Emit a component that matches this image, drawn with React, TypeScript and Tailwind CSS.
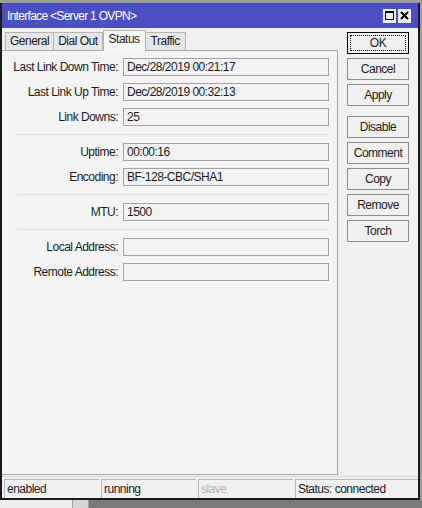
import React from 'react';

const rows: { label: string; value: string }[][] = [
  [
    { label: 'Last Link Down Time:', value: 'Dec/28/2019 00:21:17' },
    { label: 'Last Link Up Time:', value: 'Dec/28/2019 00:32:13' },
    { label: 'Link Downs:', value: '25' },
  ],
  [
    { label: 'Uptime:', value: '00:00:16' },
    { label: 'Encoding:', value: 'BF-128-CBC/SHA1' },
  ],
  [{ label: 'MTU:', value: '1500' }],
  [
    { label: 'Local Address:', value: '' },
    { label: 'Remote Address:', value: '' },
  ],
];

const buttons = [['OK', 'Cancel', 'Apply'], ['Disable', 'Comment', 'Copy', 'Remove', 'Torch']];

const Field = ({ label, value }: { label: string; value: string }) => (
  <div className="flex items-center h-[18px]">
    <div className="w-[116px] text-right pr-[1px]">{label}</div>
    <div className="ml-[4px] w-[206px] h-[18px] border border-[#a3a3a3] bg-[#f2f2f2] px-[3px] leading-[16px]">
      {value}
    </div>
  </div>
);

export default function App() {
  return (
    <div className="w-[422px] h-[508px] bg-[#9c9c9c] pt-[3px] font-['Liberation_Sans',Arial,sans-serif] text-[12px] tracking-[-0.5px] text-[#1c1c1c] overflow-hidden">
      <div className="h-[497px] w-[420px] flex flex-col bg-[#f0f0f0] border-l-2 border-r-2 border-b-2 border-[#1a1a1a]">
        {/* title bar */}
        <div className="h-[25px] bg-[#4c4fc3] flex items-center pl-[5px] pr-[7px] text-white">
          <span className="flex-1 tracking-[-0.7px]">Interface &lt;Server 1 OVPN&gt;</span>
          <div className="flex gap-[2px]">
            <div className="w-[13px] h-[14px] bg-[#ececec] flex items-center justify-center">
              <div className="w-[9px] h-[9px] border border-black border-t-2" />
            </div>
            <div className="w-[13px] h-[14px] bg-[#ececec] flex items-center justify-center">
              <svg width="9" height="9" viewBox="0 0 9 9">
                <path d="M1 1L8 8M8 1L1 8" stroke="#000" strokeWidth="2" />
              </svg>
            </div>
          </div>
        </div>

        <div className="flex flex-1">
          {/* left: tabs + panel */}
          <div className="w-[336px] flex flex-col">
            <div className="flex items-end h-[22px] pl-[3px]">
              <div className="h-[18px] px-[4px] border border-b-0 border-[#b4b4b4] bg-[#e6e6e6] leading-[17px]">General</div>
              <div className="h-[18px] px-[4px] border border-b-0 border-l-0 border-[#b4b4b4] bg-[#e6e6e6] leading-[17px]">Dial Out</div>
              <div className="h-[21px] px-[5px] border border-b-0 border-[#b4b4b4] bg-[#f7f7f7] leading-[17px] -mb-px relative z-10">Status</div>
              <div className="h-[18px] px-[5px] border border-b-0 border-l-0 border-[#b4b4b4] bg-[#e6e6e6] leading-[17px]">Traffic</div>
            </div>
            <div className="flex-1 border border-l-0 border-[#a9a9a9] bg-[#f4f4f4] pt-[7px] pl-[1px] mb-[1px]">
              {rows.map((group, gi) => (
                <React.Fragment key={gi}>
                  {gi > 0 && <div className="ml-[14px] w-[311px] h-px bg-[#dedede] my-[8px]" />}
                  <div className="flex flex-col gap-[7px]">
                    {group.map((r) => (
                      <Field key={r.label} label={r.label} value={r.value} />
                    ))}
                  </div>
                </React.Fragment>
              ))}
            </div>
          </div>

          {/* right: buttons */}
          <div className="flex-1 pl-[9px] pt-[4px] flex flex-col">
            {buttons.map((grp, gi) => (
              <div key={gi} className={`flex flex-col gap-[4px] ${gi > 0 ? 'mt-[10px]' : ''}`}>
                {grp.map((b) => (
                  <div
                    key={b}
                    className={`w-[62px] h-[22px] flex items-center justify-center bg-[#f0f0f0] border ${
                      b === 'OK' ? 'border-black' : 'border-[#8e8e8e]'
                    }`}
                  >
                    {b === 'OK' ? (
                      <div className="w-[56px] h-[16px] border border-dotted border-black flex items-center justify-center">
                        OK
                      </div>
                    ) : (
                      b
                    )}
                  </div>
                ))}
              </div>
            ))}
          </div>
        </div>

        {/* status bar */}
        <div className="h-[22px] flex border-t border-[#d8d8d8] pt-[2px] pl-[2px] gap-[2px]">
          <div className="w-[95px] h-[19px] border-t border-l border-[#b8b8b8] pl-[2px] leading-[18px]">enabled</div>
          <div className="w-[95px] h-[19px] border-t border-l border-[#b8b8b8] pl-[2px] leading-[18px]">running</div>
          <div className="w-[95px] h-[19px] border-t border-l border-[#b8b8b8] pl-[2px] leading-[18px] text-[#b4b4b4]">slave</div>
          <div className="flex-1 h-[19px] border-t border-l border-[#b8b8b8] pl-[2px] leading-[18px]">Status: connected</div>
        </div>
      </div>
      <div className="flex h-[8px]">
        <div className="w-[72px] bg-[#ededed]" />
        <div className="w-[17px] bg-[#d6d6d6] border-x border-[#a0a0a0]" />
        <div className="flex-1 bg-[#7a7a7a]" />
      </div>
    </div>
  );
}
